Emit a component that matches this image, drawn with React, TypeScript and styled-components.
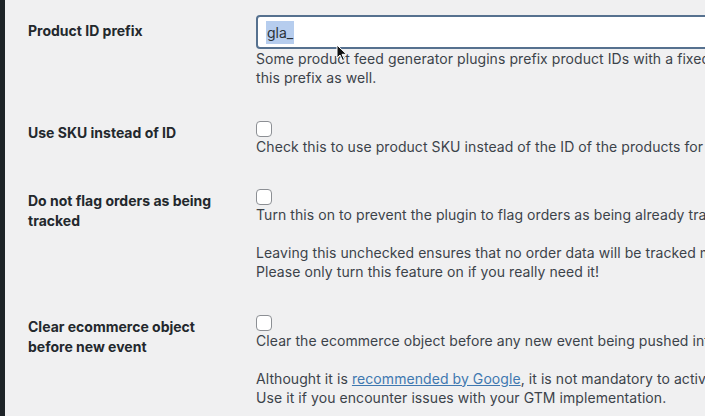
import styled, { createGlobalStyle } from 'styled-components';

const GlobalStyle = createGlobalStyle`
  html, body {
    margin: 0;
    padding: 0;
    background: #f0f0f1;
    overflow: hidden;
  }
  body {
    font-family: Inter, "Noto Sans", "Liberation Sans", sans-serif;
    font-size: 14px;
    color: #2c3338;
  }
`;

const Page = styled.div`
  display: flex;
  min-height: 416px;
  width: 705px;
  overflow: hidden;
  position: relative;
`;

const Sidebar = styled.div`
  width: 5px;
  flex: none;
  background: #1d2327;
`;

const Table = styled.div`
  flex: 1;
  padding-left: 23px;
`;

const Row = styled.div`
  display: grid;
  grid-template-columns: 228px 560px;
  align-items: start;
  padding: 15px 0 18.5px;
`;

const Label = styled.div<{ $offset: number }>`
  padding-top: ${({ $offset }) => $offset}px;
  font-weight: 700;
  line-height: 20px;
  color: #23282d;
  width: 200px;
`;

const Field = styled.div`
  display: flex;
  flex-direction: column;
  align-items: flex-start;
`;

const TextInput = styled.div`
  box-sizing: border-box;
  width: 560px;
  height: 34px;
  border: 2px solid #56718f;
  border-radius: 4px;
  background: #fff;
  padding: 0 8px;
  display: flex;
  align-items: center;
  color: #2c3338;
`;

const Selected = styled.span`
  background: #b6cdee;
  padding: 3px 1px;
`;

const Checkbox = styled.span`
  box-sizing: border-box;
  width: 16px;
  height: 16px;
  border: 1px solid #8c8f94;
  border-radius: 4px;
  background: #fff;
`;

const Description = styled.p`
  margin: 0;
  line-height: 19px;
  letter-spacing: 0.07px;
  color: #3c434a;
  white-space: nowrap;
  & + & {
    margin-top: 19px;
  }
`;

const Link = styled.a`
  color: #3f78b0;
  text-decoration: underline;
`;

const Pointer = styled.svg`
  position: absolute;
  left: 336px;
  top: 44px;
`;

export default function App() {
  return (
    <Page>
      <GlobalStyle />
      <Sidebar />
      <Table>
        <Row>
          <Label $offset={6}>Product ID prefix</Label>
          <Field>
            <TextInput>
              <Selected>gla_</Selected>
            </TextInput>
            <Description>
              Some product feed generator plugins prefix product IDs with a fixed string
              <br />
              this prefix as well.
            </Description>
          </Field>
        </Row>
        <Row>
          <Label $offset={2}>Use SKU instead of ID</Label>
          <Field>
            <Checkbox />
            <Description>
              Check this to use product SKU instead of the ID of the products for the tracking
            </Description>
          </Field>
        </Row>
        <Row>
          <Label $offset={2}>
            Do not flag orders as being
            <br />
            tracked
          </Label>
          <Field>
            <Checkbox />
            <Description>
              Turn this on to prevent the plugin to flag orders as being already tracked
            </Description>
            <Description>
              Leaving this unchecked ensures that no order data will be tracked multiple times
              <br />
              Please only turn this feature on if you really need it!
            </Description>
          </Field>
        </Row>
        <Row>
          <Label $offset={2}>
            Clear ecommerce object
            <br />
            before new event
          </Label>
          <Field>
            <Checkbox />
            <Description>
              Clear the ecommerce object before any new event being pushed into the data layer
            </Description>
            <Description>
              Althought it is <Link href="#">recommended by Google</Link>, it is not mandatory to activate
              <br />
              Use it if you encounter issues with your GTM implementation.
            </Description>
          </Field>
        </Row>
      </Table>
      <Pointer width="12" height="18" viewBox="0 0 12 18">
        <path d="M1 1 L1 14 L4 11 L6.5 16.5 L8.5 15.6 L6 10.3 L10.5 10.3 Z" fill="#111" stroke="#fff" strokeWidth="1" />
      </Pointer>
    </Page>
  );
}
